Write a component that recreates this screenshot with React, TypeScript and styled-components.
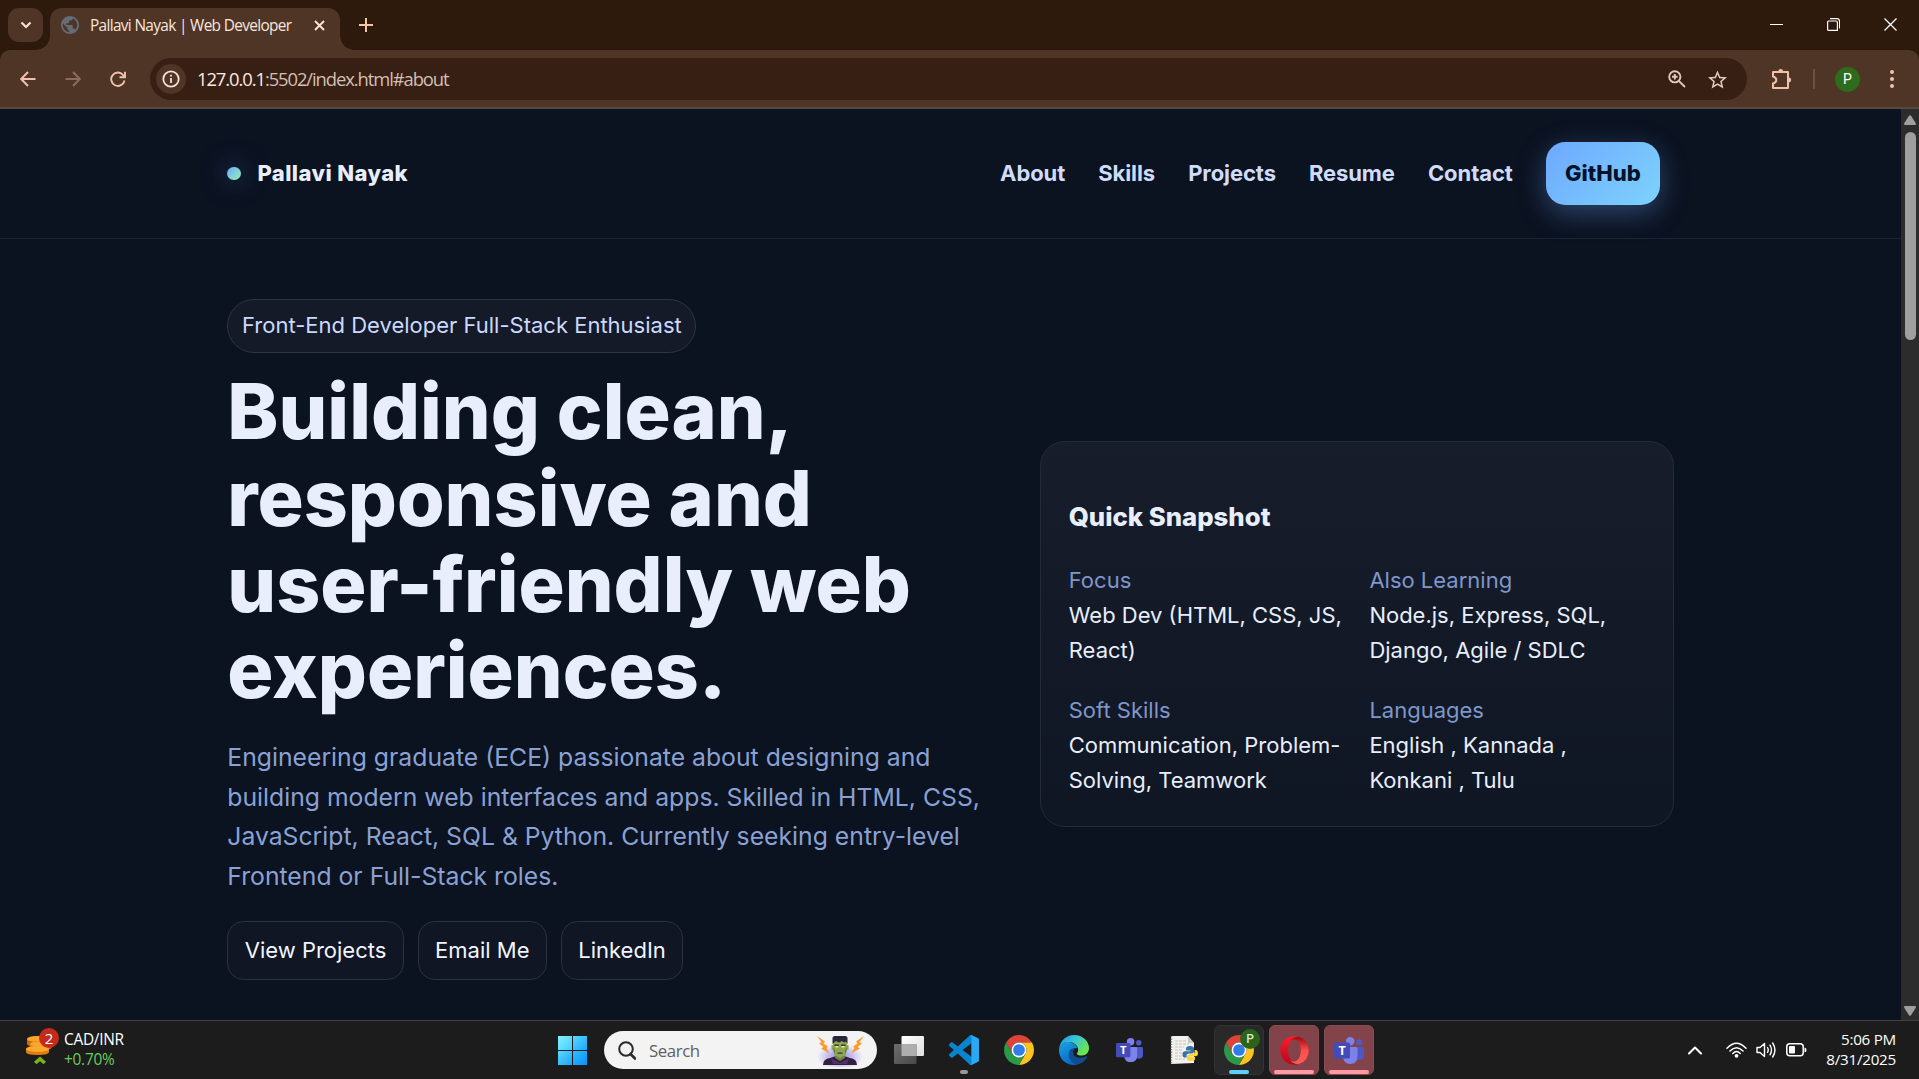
import React from "react";
import styled, { createGlobalStyle } from "styled-components";

const GlobalStyle = createGlobalStyle`
  *, *::before, *::after { box-sizing: border-box; }
  html, body { margin: 0; padding: 0; overflow: hidden; background: #0b1220; }
  button { font: inherit; border: 0; padding: 0; background: none; }
  svg { display: block; flex: none; }
`;

const uiFont = `"Segoe UI", "Open Sans", "Noto Sans", sans-serif`;

const Screen = styled.div`
  width: 1919px;
  height: 1079px;
  display: flex;
  flex-direction: column;
  overflow: hidden;
  font-family: ${uiFont};
`;

/* ---------- Browser ---------- */

const TabStrip = styled.div`
  height: 50px;
  flex: none;
  display: flex;
  align-items: flex-start;
  padding: 8px 0 0 8px;
  background: #2e1a0d;
`;

const TabSearch = styled.button`
  width: 35px;
  height: 34px;
  border-radius: 11px;
  background: #4f3526;
  color: #f7e2d8;
  display: grid;
  place-items: center;
`;

const Tab = styled.div`
  position: relative;
  width: 290px;
  height: 42px;
  margin-left: 7px;
  padding: 0 15px 8px 11px;
  display: flex;
  align-items: center;
  border-radius: 12px 12px 0 0;
  background: #4f3526;
  color: #f9e6dc;

  &::before, &::after {
    content: "";
    position: absolute;
    bottom: 0;
    width: 14px;
    height: 14px;
  }
  &::before {
    left: -14px;
    background: radial-gradient(circle at 0 0, transparent 13.5px, #4f3526 14px);
  }
  &::after {
    right: -14px;
    background: radial-gradient(circle at 100% 0, transparent 13.5px, #4f3526 14px);
  }
`;

const TabTitle = styled.span`
  flex: 1;
  margin-left: 11px;
  padding-top: 2px;
  font-size: 15.4px;
  line-height: 22px;
  letter-spacing: -0.66px;
  white-space: nowrap;
`;

const NewTab = styled.button`
  width: 28px;
  height: 34px;
  margin-left: 12px;
  color: #f3c5ab;
  display: grid;
  place-items: center;
`;

const WindowButtons = styled.div`
  margin-left: auto;
  display: flex;
  height: 33px;
  align-items: center;
  color: #fff;
`;

const WindowButton = styled.button`
  width: 57px;
  height: 33px;
  display: grid;
  place-items: center;
  color: inherit;
`;

const ToolbarWrap = styled.div`
  flex: none;
  background: #2e1a0d;
`;

const Toolbar = styled.div`
  height: 59px;
  display: flex;
  align-items: center;
  padding: 1px 12px 0 13px;
  background: #4f3526;
  border-bottom: 2px solid #564840;
  border-radius: 10px 10px 0 0;
`;

const ToolButton = styled.button<{ $dim?: boolean; $ml?: number }>`
  width: 29px;
  height: 34px;
  flex: none;
  margin-left: ${(p) => p.$ml ?? 0}px;
  display: grid;
  place-items: center;
  color: ${(p) => (p.$dim ? "#8d6b5a" : "#f0c2a9")};
`;

const Omnibox = styled.div`
  width: 1597px;
  height: 42px;
  flex: none;
  margin-left: 18px;
  padding: 0 20px 0 6px;
  display: flex;
  align-items: center;
  border-radius: 21px;
  background: #372013;
  color: #dfcabf;
`;

const SiteInfo = styled.span`
  width: 30px;
  height: 30px;
  border-radius: 50%;
  background: #4f3526;
  color: #f7e2d8;
  display: grid;
  place-items: center;
`;

const Url = styled.span`
  flex: 1;
  margin-left: 11px;
  font-size: 18.4px;
  line-height: 26px;
  letter-spacing: -1.08px;
  color: #d3bfb3;

  b { font-weight: 400; color: #fbeae2; }
`;

const Star = styled.svg`
  margin-left: 22px;
`;

const ToolDivider = styled.span`
  width: 2px;
  height: 20px;
  margin-left: 17px;
  background: #6f4f3e;
`;

const Avatar = styled.span`
  width: 25px;
  height: 25px;
  flex: none;
  margin-left: 20px;
  border-radius: 50%;
  background: #2f6b1c;
  color: #fff;
  font: 400 14px/25px Roboto, sans-serif;
  text-align: center;
`;

/* ---------- Page ---------- */

const Viewport = styled.div`
  height: 911px;
  flex: none;
  display: flex;
  overflow: hidden;
`;

const Page = styled.div`
  width: 1901px;
  height: 100%;
  background: #0b1220;
  color: #e8eefc;
  font-family: Inter, sans-serif;
  font-size: 22px;
  line-height: 35.2px;
`;

const SiteHeader = styled.header`
  height: 130px;
  border-bottom: 1px solid #1d2330;
`;

const Container = styled.div`
  width: 1446.5px;
  margin: 0 auto;
`;

const HeaderRow = styled(Container)`
  height: 129px;
  padding-right: 13.75px;
  display: flex;
  align-items: center;
  justify-content: space-between;
`;

const Brand = styled.a`
  display: flex;
  align-items: center;
  gap: 16.5px;
  font-weight: 800;
  letter-spacing: 0.41px;
`;

const BrandDot = styled.span`
  width: 13.75px;
  height: 13.75px;
  border-radius: 50%;
  background: linear-gradient(135deg, #6ea8ff, #93f5b1);
  box-shadow: 0 0 27px rgba(110, 168, 255, 0.5);
`;

const Nav = styled.nav`
  display: flex;
  align-items: center;
  gap: 33px;
`;

const NavLink = styled.a`
  font-weight: 700;
  letter-spacing: -0.08px;
  color: #cfdcfb;
`;

const NavCta = styled.a`
  padding: 13.75px 19.25px;
  border-radius: 19.25px;
  font-weight: 800;
  color: #06122a;
  background: linear-gradient(135deg, #6ea8ff, #7dd3fc);
  box-shadow: 0 8px 28px rgba(110, 168, 255, 0.35);
`;

const Hero = styled(Container)`
  padding-top: 60px;
  display: flex;
  align-items: flex-start;
  justify-content: space-between;
`;

const HeroText = styled.div`
  width: 763px;
`;

const Pill = styled.span`
  display: inline-block;
  padding: 8.25px 13.75px;
  border: 1px solid #2e3441;
  border-radius: 27px;
  background: #141a27;
  color: #cbd9ff;
  white-space: nowrap;
  vertical-align: top;
`;

const Title = styled.h1`
  margin: 15.68px 0 0;
  font-size: 77px;
  line-height: 86.24px;
  font-weight: 800;
`;

const Lead = styled.p`
  margin: 24.72px 0 0;
  font-size: 24.75px;
  line-height: 39.6px;
  color: #8aa1d4;
  white-space: nowrap;
`;

const Actions = styled.div`
  margin-top: 24.55px;
  display: flex;
  gap: 13.75px;
`;

const GhostButton = styled.a`
  padding: 11px 16.5px;
  border: 1px solid #2c323f;
  border-radius: 16.5px;
  background: #101623;
  color: #f2f5ff;
`;

const Card = styled.aside`
  width: 633.5px;
  margin-top: 142px;
  padding: 28px 27.5px 27.5px;
  border: 1px solid #242b38;
  border-radius: 24.75px;
  background: linear-gradient(180deg, #171d2a, #0f1624);
`;

const CardTitle = styled.h3`
  margin: 25.74px 0;
  font-size: 25.74px;
  line-height: 41.2px;
  font-weight: 800;
`;

const Facts = styled.div`
  display: grid;
  grid-template-columns: 1fr 1fr;
  gap: 24.75px;
`;

const FactLabel = styled.div`
  color: #7f96ca;
`;

const FactValue = styled.div`
  white-space: nowrap;
`;

const Scrollbar = styled.div`
  width: 18px;
  height: 100%;
  padding: 6px 0 4px;
  display: flex;
  flex-direction: column;
  align-items: center;
  background: #2c2c2c;
  color: #9f9f9f;
`;

const Thumb = styled.span`
  width: 11px;
  height: 208px;
  margin: 7px 0 auto;
  border-radius: 6px;
  background: #9f9f9f;
`;

/* ---------- Taskbar ---------- */

const TaskbarRoot = styled.footer`
  flex: 1;
  display: flex;
  align-items: center;
  padding: 0 0 0 24px;
  background: #1c1c1c;
  border-top: 1px solid #414141;
  color: #fff;
`;

const Widget = styled.div`
  width: 534px;
  display: flex;
  align-items: center;
`;

const WidgetIcon = styled.span`
  position: relative;
  width: 40px;
  height: 42px;
  margin-top: -2px;
  padding: 6px 0 0 1px;
`;

const CountBadge = styled.span`
  position: absolute;
  left: 15px;
  top: 0;
  width: 20px;
  height: 20px;
  border-radius: 50%;
  background: #c42b1c;
  font-size: 15px;
  line-height: 20px;
  text-align: center;
`;

const WidgetText = styled.span<{ $tone?: string }>`
  display: block;
  font-size: 15.4px;
  line-height: 20px;
  letter-spacing: -0.25px;
  color: ${(p) => p.$tone ?? "#fff"};
`;

const StartButton = styled.button`
  width: 29px;
  height: 29px;
  display: grid;
  grid-template-columns: 14px 14px;
  grid-template-rows: 14px 14px;
  gap: 1px;
  overflow: hidden;

  i { background: linear-gradient(135deg, #58d9ff, #1da5fa); }
  i:first-child { background: linear-gradient(135deg, #83f0ff, #45cdfd); }
  i:last-child { background: linear-gradient(135deg, #33bdff, #0a90f8); }
`;

const SearchBox = styled.div`
  width: 273px;
  height: 38px;
  margin-left: 17px;
  margin-right: 7px;
  padding: 0 11px 0 14px;
  display: flex;
  align-items: center;
  border-radius: 19px;
  background: #f3f3f3;
  color: #5f5f5f;
`;

const SearchLabel = styled.span`
  flex: 1;
  margin-left: 13px;
  padding-top: 1px;
  font-size: 16.8px;
  line-height: 24px;
  letter-spacing: -0.4px;
`;

const Cells = styled.div`
  display: flex;
  gap: 5px;
`;

const Cell = styled.div<{ $bg?: string; $edge?: string }>`
  position: relative;
  width: 50px;
  height: 50px;
  border-radius: 6px;
  border: 1px solid ${(p) => p.$edge ?? "transparent"};
  background: ${(p) => p.$bg ?? "transparent"};
  display: grid;
  place-items: center;
`;

const Indicator = styled.i<{ $w: number; $color: string }>`
  position: absolute;
  bottom: 0;
  left: calc(50% - ${(p) => p.$w / 2}px);
  width: ${(p) => p.$w}px;
  height: 4px;
  border-radius: 2px;
  background: ${(p) => p.$color};
`;

const ProfileBadge = styled.span`
  position: absolute;
  right: 3px;
  top: 3px;
  width: 20px;
  height: 20px;
  border-radius: 50%;
  background: #2a641b;
  color: #d5e6cf;
  font: 500 12px/20px Roboto, sans-serif;
  text-align: center;
`;

const Tray = styled.div`
  margin-left: auto;
  padding-right: 23px;
  display: flex;
  align-items: center;
`;

const TrayIcon = styled.span<{ $ml?: number }>`
  margin-left: ${(p) => p.$ml ?? 0}px;
`;

const Clock = styled.div`
  width: 80px;
  margin: -2px 0 0 9px;
  font-size: 15.2px;
  line-height: 20px;
  letter-spacing: -0.25px;
  text-align: right;
  white-space: nowrap;
`;

/* ---------- Icons ---------- */

const Stroke = ({ d, w, h = w, box, sw = 2, cap = "butt" }: { d: string; w: number; h?: number; box: string; sw?: number; cap?: "butt" | "round" }) => (
  <svg width={w} height={h} viewBox={box} fill="none" stroke="currentColor" strokeWidth={sw} strokeLinecap={cap} strokeLinejoin={cap === "round" ? "round" : "miter"}>
    <path d={d} />
  </svg>
);

const Globe = () => (
  <svg width="18" height="18" viewBox="2 2 20 20" fill="#626d75">
    <path d="M12 2C6.480 2 2 6.480 2 12s4.480 10 10 10 10-4.480 10-10S17.520 2 12 2zm-1 17.930c-3.950-.49-7-3.850-7-7.930 0-.62.08-1.210.21-1.790L9 15v1c0 1.100.9 2 2 2v1.930zm6.900-2.540c-.26-.81-1-1.390-1.900-1.390h-1v-3c0-.55-.45-1-1-1H8v-2h2c.55 0 1-.45 1-1V7h2c1.100 0 2-.9 2-2v-.41c2.930 1.190 5 4.060 5 7.410 0 2.080-.8 3.970-2.100 5.390z" />
  </svg>
);

const ChromeLogo = () => (
  <svg width="30" height="30" viewBox="2 2 44 44">
    <path fill="#db4437" d="M4.950 13A22 22 0 0 1 43.050 13H24A11 11 0 0 0 14.470 29.500Z" />
    <path fill="#fcc31e" d="M43.050 13A22 22 0 0 1 24 46L33.530 29.500A11 11 0 0 0 24 13Z" />
    <path fill="#2a9a48" d="M24 46A22 22 0 0 1 4.950 13L14.470 29.500A11 11 0 0 0 33.530 29.500Z" />
    <circle cx="24" cy="24" r="11" fill="#fff" />
    <circle cx="24" cy="24" r="8.600" fill="#2f7de9" />
  </svg>
);

const CodeLogo = () => (
  <svg width="30" height="30" viewBox="0 0 100 100">
    <path fill="#0b84d0" fillRule="evenodd" d="M96.46 10.8L75.86.88C73.47-.27 70.62.2 68.75 2.08L29.36 38.04 12.2 25.01c-1.6-1.21-3.83-1.11-5.32.24L1.38 30.26c-1.81 1.65-1.82 4.5 0 6.16L16.25 50 1.37 63.58c-1.82 1.66-1.81 4.51 0 6.16l5.5 5.01c1.49 1.35 3.72 1.45 5.32.24l17.17-13.03 39.39 35.96c1.87 1.88 4.72 2.35 7.11 1.2l20.6-9.92c2.17-1.04 3.54-3.23 3.54-5.63V16.43c0-2.4-1.38-4.59-3.54-5.63zM75.01 72.7L45.11 50l29.9-22.7v45.4z" />
    <path fill="#2aa9f2" d="M75 1 96.500 10.800Q100 12.500 100 16.500V83.500Q100 87.500 96.500 89.200L75.900 99.100Q72 100.500 69 98 75 99 75 92V8Q75 1 69 2 72-.5 75 1Z" />
  </svg>
);

const EdgeLogo = () => (
  <svg width="30" height="30" viewBox="0 0 30 30">
    <defs>
      <linearGradient id="edgeTop" x1="0" y1="0" x2="1" y2=".6">
        <stop offset="0" stopColor="#1c8fdb" />
        <stop offset=".45" stopColor="#36c3dd" />
        <stop offset="1" stopColor="#6ee64a" />
      </linearGradient>
      <linearGradient id="edgeLeft" x1="0" y1="0" x2=".6" y2="1">
        <stop offset="0" stopColor="#1ba3e4" />
        <stop offset="1" stopColor="#0663c4" />
      </linearGradient>
    </defs>
    <path fill="url(#edgeLeft)" d="M0 14.500C1 8 6.500 6.500 10 7 14 7.500 17 10 18.500 13 15 12.500 12.500 15 13 18.500 13.700 23.500 18.500 26.500 24 25 21.500 28.500 18 30 14.500 30 6 30-.5 23 0 14.500Z" />
    <path fill="#0f4f8f" d="M10.500 16C8 22 12 29 18.500 29.400 22.500 28.500 26 26 28 22.500 28.500 21.500 28 21 27 21.400 20.500 24.500 15 22 14.200 18.500 13.500 15.500 15 14 16 13.500 14 13 11.500 14 10.500 16Z" />
    <path fill="url(#edgeTop)" d="M0 14C1 5.500 7.500 0 15 0 24 0 30 6.500 30 13 30 17.500 27 20.500 23 20.500 19.500 20.500 17.800 19.500 17.800 18.700 17.800 18 19.200 17.500 19.200 15 19.200 10.500 14.500 7 9.500 7 4.500 7 1 10 0 14Z" />
  </svg>
);

const TeamsLogo = ({ size = 27 }: { size?: number }) => (
  <svg width={size} height={size * 0.9} viewBox="0 0 30 27">
    <circle cx="25.300" cy="5.200" r="3" fill="#5059c9" />
    <path fill="#4f57c6" d="M19 10H28.500Q30 10 30 11.500V18.500Q30 23 25 23 21 23 19 20Z" />
    <circle cx="16.200" cy="4.300" r="4.200" fill="#7b83eb" />
    <path fill="#7b83eb" d="M9 10H22Q23.500 10 23.500 11.500V19Q23.500 27 16 27 10 27 9 20Z" />
    <rect x="0" y="5.500" width="16" height="16" rx="1.500" fill="#444bb8" />
    <text x="8" y="18" fill="#fff" fontSize="12.500" fontWeight="700" fontFamily="Open Sans, sans-serif" textAnchor="middle">T</text>
  </svg>
);

const PythonFile = () => (
  <svg width="28" height="30" viewBox="0 0 28 30">
    <path fill="#f1f1ee" d="M1 1H18L24 8V28L1 29Z" />
    <path fill="#c9c9c9" d="M18 1V8H24Z" />
    <path stroke="#8a8a8a" strokeWidth="1.500" strokeDasharray="1.300 1.300" d="M1.500 1V29" />
    <path stroke="#b9b9b9" strokeWidth=".8" strokeDasharray="3 1" d="M5 6H16M5 9H19M5 12H14M5 15H12M5 18H13M5 21H12M5 24H15" />
    <path fill="#3572a5" d="M20 11Q16 11 16 13.500V15.500H20.500V16.200H15Q12.500 16.200 12.500 19.500T15 22.500H16.500V20.500Q16.500 18.500 19 18.500H22Q24 18.500 24 16.500V13.500Q24 11 20 11Z" />
    <path fill="#ffd43b" d="M21 26Q25 26 25 24V22H20.500V21.300H25.500Q28 21.300 28 18.300T25.500 15H24.600V17Q24.600 19.200 22.200 19.200H19Q17 19.200 17 21.200V24Q17 26 21 26Z" />
  </svg>
);

const OperaLogo = () => (
  <svg width="29" height="29" viewBox="0 0 29 29">
    <defs>
      <linearGradient id="opera" x1="0" y1="0" x2="0" y2="1">
        <stop offset="0" stopColor="#ff1b2d" />
        <stop offset="1" stopColor="#b8071b" />
      </linearGradient>
      <linearGradient id="operaRight" x1="0" y1="0" x2="0" y2="1">
        <stop offset="0" stopColor="#9c0812" />
        <stop offset=".5" stopColor="#f8504c" />
        <stop offset="1" stopColor="#ff5a55" />
      </linearGradient>
    </defs>
    <circle cx="14.500" cy="14.500" r="14.300" fill="url(#opera)" />
    <path fill="url(#operaRight)" d="M9.800 4.800Q14 .8 18.500 .8 28.500 3.500 28.800 14.500 28.500 25.500 18.500 28.200 14 28.200 9.800 24.200 14 26.500 17.500 23.500 20.600 20.500 20.600 14.500T17.500 5.500Q14 2.500 9.800 4.800Z" />
    <ellipse cx="14.300" cy="14.500" rx="6.300" ry="11" fill="#82444a" />
  </svg>
);

const TaskView = () => (
  <svg width="30" height="28" viewBox="0 0 30 28">
    <defs>
      <linearGradient id="paneBack" x1="0" y1="0" x2="1" y2="1">
        <stop offset="0" stopColor="#ffffff" />
        <stop offset="1" stopColor="#dedede" />
      </linearGradient>
      <linearGradient id="paneFront" x1="0" y1="0" x2="1" y2="1">
        <stop offset="0" stopColor="#6e6e6e" />
        <stop offset="1" stopColor="#484848" />
      </linearGradient>
    </defs>
    <rect x="7.500" y="0" width="22.500" height="20" rx="1" fill="url(#paneBack)" />
    <rect x="0" y="8" width="22.500" height="20" rx="1" fill="url(#paneFront)" />
    <path d="M7.500 8H22.500V20H7.500Z" fill="#aeaeae" />
  </svg>
);

const Monster = () => (
  <svg width="50" height="34" viewBox="0 0 50 34">
    <defs>
      <radialGradient id="halo">
        <stop offset="0" stopColor="#8d84f2" />
        <stop offset="1" stopColor="#8d84f2" stopOpacity="0" />
      </radialGradient>
    </defs>
    <ellipse cx="24" cy="24" rx="23" ry="13" fill="url(#halo)" />
    <path fill="#33203f" d="M7 32Q7 26 14 25L20 23H28L34 25Q41 26 41 32Z" />
    <path fill="#54306b" d="M15 25.500 24 30 33 25.500 31 31H17Z" />
    <path fill="#6b8540" d="M19 21H29V25L24 28 19 25Z" />
    <path fill="#8ea655" d="M17 6H31V12H32.500V17H31L29.500 22 24 25 18.500 22 17 17H15.500V12H17Z" />
    <path fill="#6a8440" d="M17 14 19 17V22L17.500 18ZM31 14 29 17V22L30.500 18Z" />
    <path fill="#2c2638" d="M16.500 4.500 18 3H30L31.500 4.500V11L30 8.500 28 9.500 26 8 23 9.500 20 8 18 9.500 16.500 11Z" />
    <path fill="#2f3f20" d="M18.500 11.500H22.800V13H18.500ZM25.200 11.500H29.500V13H25.200ZM21.500 19.500H26.500V20.800H21.500Z" />
    <path fill="#f3e8a8" d="M19.500 13H22.300V14.500H19.500ZM25.700 13H28.500V14.500H25.700Z" />
    <path fill="#fb9b2c" d="M1 3 9 8.500 7.500 10.500 12 13.500 10.500 15 13.500 20.500 5 15.500 7.500 14 3 10.500 5.500 9Z" />
    <path fill="#fb9b2c" d="M48 3 40 8.500 41.500 10.500 37 13.500 38.500 15 35 20.500 44 15.500 41.500 14 46 10.500 43.500 9Z" />
  </svg>
);

const Coins = () => (
  <svg width="30" height="36" viewBox="0 0 30 36">
    <path fill="#c96a0c" d="M2 5Q2 2 13 2T24 5V10Q24 13 13 13T2 10Z" />
    <ellipse cx="13" cy="5" rx="11" ry="3" fill="#f9a62b" />
    <path fill="#d97910" d="M5 10Q5 7 16 7T27 10V13Q27 16 16 16T5 13Z" />
    <ellipse cx="16" cy="10" rx="11" ry="2.800" fill="#f9a62b" />
    <path fill="#e07d0c" d="M1 15Q1 12 12.500 12T24 15V18Q24 21 12.500 21T1 18Z" />
    <ellipse cx="12.500" cy="15" rx="11.500" ry="3" fill="#fba92e" />
    <path d="M10.200 29 15 24.800 19.800 29" fill="none" stroke="#76b41e" strokeWidth="3.600" />
  </svg>
);

const WifiIcon = () => (
  <svg width="21" height="16" viewBox="0 0 21 16" fill="none" stroke="#fff" strokeWidth="1.500" strokeLinecap="round">
    <path d="M1 6.200Q10.500-3.600 20 6.200M4 9Q10.500 2.300 17 9M6.800 11.500Q10.500 7.700 14.200 11.500" />
    <circle cx="10.500" cy="13.800" r="1.900" fill="#fff" stroke="none" />
  </svg>
);

const VolumeIcon = () => (
  <svg width="21" height="18" viewBox="0 0 21 18" fill="none" stroke="#fff" strokeWidth="1.400" strokeLinecap="round" strokeLinejoin="round">
    <path d="M1 6.500H4L8.500 2.500V15.500L4 11.500H1Z" />
    <path d="M11.500 6.500Q13 9 11.500 11.500M14 4.200Q17 9 14 13.800M16.700 2Q21.200 9 16.700 16" />
  </svg>
);

const BatteryIcon = () => (
  <svg width="21" height="14" viewBox="0 0 21 14">
    <rect x=".8" y=".8" width="16.400" height="12" rx="3" fill="none" stroke="#fff" strokeWidth="1.500" />
    <rect x="3" y="3" width="6" height="7.600" rx="1" fill="#fff" />
    <path d="M18.500 4.500Q20.500 4.500 20.500 7T18.500 9.300Z" fill="#fff" />
  </svg>
);

/* ---------- Data ---------- */

const links = ["About", "Skills", "Projects", "Resume", "Contact"];
const actions = ["View Projects", "Email Me", "LinkedIn"];
const facts = [
  { label: "Focus", lines: ["Web Dev (HTML, CSS, JS,", "React)"] },
  { label: "Also Learning", lines: ["Node.js, Express, SQL,", "Django, Agile / SDLC"] },
  { label: "Soft Skills", lines: ["Communication, Problem-", "Solving, Teamwork"] },
  { label: "Languages", lines: ["English , Kannada ,", "Konkani , Tulu"] },
];

const Lines = ({ items }: { items: string[] }) => (
  <>
    {items.map((t, i) => (
      <React.Fragment key={t}>
        {i > 0 && <br />}
        {t}
      </React.Fragment>
    ))}
  </>
);

const Browser = () => (
  <>
    <TabStrip>
      <TabSearch><Stroke d="M1.500 1.500 6 6 10.500 1.500" w={12} h={8} box="0 0 12 8" sw={2.200} /></TabSearch>
      <Tab>
        <Globe />
        <TabTitle>Pallavi Nayak | Web Developer</TabTitle>
        <Stroke d="M1 1 10 10M10 1 1 10" w={11} box="0 0 11 11" sw={1.900} />
      </Tab>
      <NewTab><Stroke d="M7 0V14M0 7H14" w={14} box="0 0 14 14" /></NewTab>
      <WindowButtons>
        <WindowButton><Stroke d="M0 .5H13" w={13} h={1} box="0 0 13 1" sw={1} /></WindowButton>
        <WindowButton>
          <Stroke d="M.6 4Q.6 3 1.600 3H9Q10.400 3 10.400 4.400V12.400H1.600Q.6 12.400 .6 11.400ZM3 .6H10Q12.600 .6 12.600 3.500V10.500" w={13} box="0 0 13 13" sw={1.200} />
        </WindowButton>
        <WindowButton><Stroke d="M.5 .5 12.500 12.500M12.500 .5 .5 12.500" w={13} box="0 0 13 13" sw={1.300} /></WindowButton>
      </WindowButtons>
    </TabStrip>
    <ToolbarWrap>
      <Toolbar>
        <ToolButton><Stroke d="M15.500 8H1.500M8 1 1.200 8 8 15" w={16} box="0 0 16 16" /></ToolButton>
        <ToolButton $dim $ml={16}><Stroke d="M.5 8H14.500M8 1 14.800 8 8 15" w={16} box="0 0 16 16" /></ToolButton>
        <ToolButton $ml={16}><Stroke d="M14.500 9.500A6.700 6.700 0 1 1 13.500 4.500L14.800 6M15 .8V6.300H9.500" w={16} box="0 0 16 16" sw={1.900} /></ToolButton>
        <Omnibox>
          <SiteInfo>
            <svg width="18" height="18" viewBox="0 0 18 18" fill="none" stroke="currentColor" strokeWidth="1.800">
              <circle cx="9" cy="9" r="7.700" />
              <path d="M9 8V13M9 4.800V6.600" />
            </svg>
          </SiteInfo>
          <Url><b>127.0.0.1</b>:5502/index.html#about</Url>
          <svg width="18" height="18" viewBox="0 0 18 18" fill="none" stroke="currentColor" strokeWidth="1.900">
            <circle cx="6.800" cy="6.800" r="5.600" />
            <path d="M10.800 10.800 17 17M6.800 4V9.600M4 6.800H9.600" />
          </svg>
          <Star width="19" height="19" viewBox="2 1.500 20 20" fill="currentColor">
            <path d="M22 9.240l-7.190-.62L12 2 9.190 8.630 2 9.240l5.460 4.730L5.820 21 12 17.270 18.180 21l-1.630-7.030L22 9.240zM12 15.400l-3.760 2.270 1-4.280-3.320-2.880 4.380-.38L12 6.100l1.710 4.040 4.380.38-3.320 2.880 1 4.280L12 15.400z" />
          </Star>
        </Omnibox>
        <ToolButton $ml={20}>
          <svg width="21" height="21" viewBox="0 0 21 21" fill="none" stroke="currentColor" strokeWidth="2">
            <path strokeLinejoin="round" d="M2 3H17V19H2V14.500Q5.300 13.500 5.300 11T2 7.500Z" />
            <path fill="currentColor" stroke="none" d="M7.300 2.500A2.400 2.400 0 0 1 12.100 2.500ZM17.800 8.600A2.400 2.400 0 0 1 17.800 13.400Z" />
          </svg>
        </ToolButton>
        <ToolDivider />
        <Avatar>P</Avatar>
        <ToolButton $ml={17}>
          <svg width="4" height="18" viewBox="0 0 4 18" fill="currentColor">
            <circle cx="2" cy="2" r="2" /><circle cx="2" cy="9" r="2" /><circle cx="2" cy="16" r="2" />
          </svg>
        </ToolButton>
      </Toolbar>
    </ToolbarWrap>
  </>
);

const Portfolio = () => (
  <Page>
    <SiteHeader>
      <HeaderRow>
        <Brand><BrandDot />Pallavi Nayak</Brand>
        <Nav>
          {links.map((l) => <NavLink key={l}>{l}</NavLink>)}
          <NavCta>GitHub</NavCta>
        </Nav>
      </HeaderRow>
    </SiteHeader>
    <Hero>
      <HeroText>
        <Pill>Front-End Developer Full-Stack Enthusiast</Pill>
        <Title><Lines items={["Building clean,", "responsive and", "user-friendly web", "experiences."]} /></Title>
        <Lead>
          <Lines
            items={[
              "Engineering graduate (ECE) passionate about designing and",
              "building modern web interfaces and apps. Skilled in HTML, CSS,",
              "JavaScript, React, SQL & Python. Currently seeking entry-level",
              "Frontend or Full-Stack roles.",
            ]}
          />
        </Lead>
        <Actions>{actions.map((a) => <GhostButton key={a}>{a}</GhostButton>)}</Actions>
      </HeroText>
      <Card>
        <CardTitle>Quick Snapshot</CardTitle>
        <Facts>
          {facts.map((f) => (
            <div key={f.label}>
              <FactLabel>{f.label}</FactLabel>
              <FactValue><Lines items={f.lines} /></FactValue>
            </div>
          ))}
        </Facts>
      </Card>
    </Hero>
  </Page>
);

const Taskbar = () => (
  <TaskbarRoot>
    <Widget>
      <WidgetIcon><Coins /><CountBadge>2</CountBadge></WidgetIcon>
      <div>
        <WidgetText>CAD/INR</WidgetText>
        <WidgetText $tone="#6ccb5f">+0.70%</WidgetText>
      </div>
    </Widget>
    <StartButton><i /><i /><i /><i /></StartButton>
    <SearchBox>
      <svg width="18" height="19" viewBox="0 0 18 19" fill="none" stroke="#2b2b2b" strokeWidth="2">
        <circle cx="8" cy="8" r="6.800" />
        <path d="M12.500 13 17 17.500" strokeWidth="2.600" strokeLinecap="round" />
      </svg>
      <SearchLabel>Search</SearchLabel>
      <Monster />
    </SearchBox>
    <Cells>
      <Cell><TaskView /></Cell>
      <Cell><CodeLogo /><Indicator $w={8} $color="#9a9a9a" /></Cell>
      <Cell><ChromeLogo /></Cell>
      <Cell><EdgeLogo /></Cell>
      <Cell><TeamsLogo /></Cell>
      <Cell><PythonFile /></Cell>
      <Cell $bg="#292929" $edge="#323232">
        <ChromeLogo />
        <ProfileBadge>P</ProfileBadge>
        <Indicator $w={20} $color="#60cdff" />
      </Cell>
      <Cell $bg="#82444a" $edge="#8a4c52"><OperaLogo /><Indicator $w={40} $color="#ff99a4" /></Cell>
      <Cell $bg="#82444a" $edge="#8a4c52"><TeamsLogo size={30} /><Indicator $w={40} $color="#ff99a4" /></Cell>
    </Cells>
    <Tray>
      <Stroke d="M1 7.500 7 1.500 13 7.500" w={14} h={9} box="0 0 14 9" sw={2} cap="round" />
      <TrayIcon $ml={24}><WifiIcon /></TrayIcon>
      <TrayIcon $ml={9}><VolumeIcon /></TrayIcon>
      <TrayIcon $ml={9}><BatteryIcon /></TrayIcon>
      <Clock>5:06 PM<br />8/31/2025</Clock>
    </Tray>
  </TaskbarRoot>
);

export default function App() {
  return (
    <Screen>
      <GlobalStyle />
      <Browser />
      <Viewport>
        <Portfolio />
        <Scrollbar>
          <svg width="12" height="10" viewBox="0 0 12 10" fill="currentColor"><path d="M5 .8Q6-.5 7 .8L11.800 8.300Q12.300 10 11 10H1Q-.3 10 .2 8.300Z" /></svg>
          <Thumb />
          <svg width="12" height="10" viewBox="0 0 12 10" fill="currentColor"><path d="M5 9.200Q6 10.500 7 9.200L11.800 1.700Q12.300 0 11 0H1Q-.3 0 .2 1.700Z" /></svg>
        </Scrollbar>
      </Viewport>
      <Taskbar />
    </Screen>
  );
}
